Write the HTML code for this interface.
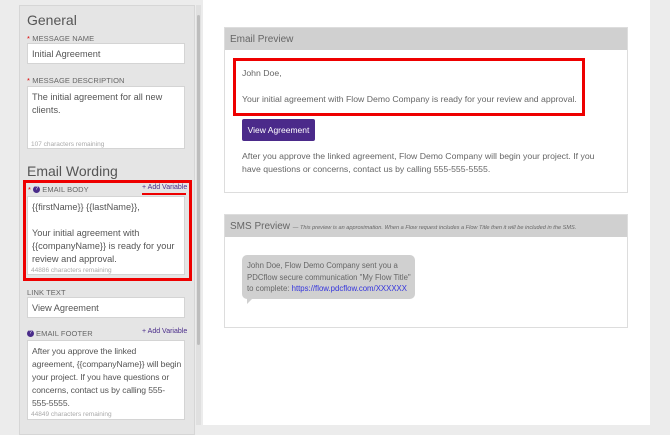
<!DOCTYPE html>
<html><head><style>
*{margin:0;padding:0;box-sizing:border-box}
body{width:670px;height:425px;overflow:hidden;background:#ececec;font-family:"Liberation Sans",sans-serif;position:relative}
.a{position:absolute;white-space:nowrap}
.w{white-space:normal}
.lp{left:19px;top:5px;width:176px;height:430px;background:#e5e5e5;border:1px solid #d6d6d6}
.h{font-size:14px;color:#555}
.lbl{font-size:7.5px;color:#666;letter-spacing:.1px}
.lbl b{color:#d00;font-weight:normal}
.in{left:27px;width:158px;background:#fff;border:1px solid #d4d4d4;font-size:9.2px;color:#555;padding:4px 4px;line-height:13px;white-space:nowrap;overflow:hidden}
.rem{font-size:6.5px;color:#aaa;left:31px}
.av{font-size:7px;color:#4a2c8a}
.q{display:inline-block;width:7px;height:7px;border-radius:50%;background:#4a2c8a;color:#fff;font-size:5px;text-align:center;line-height:7px;vertical-align:middle;margin-right:2px;margin-top:-2px}
.card{left:224px;width:404px;background:#fff;border:1px solid #ddd}
.ch{height:22px;background:#d0d0d0;font-size:10px;color:#666;padding:6px 5px;white-space:nowrap;overflow:hidden}
.t{font-size:8.7px;color:#666}
</style></head><body>
<div class="a lp"></div>
<div class="a" style="left:196px;top:5px;width:5px;height:420px;background:#e0e0e0"></div>
<div class="a" style="left:197px;top:15px;width:3px;height:330px;background:#bdbdbd;border-radius:2px"></div>
<div class="a" style="left:203px;top:0;width:447px;height:425px;background:#fff"></div>

<div class="a h" style="left:27px;top:12px">General</div>
<div class="a lbl" style="left:27px;top:34px"><b>*</b> MESSAGE NAME</div>
<div class="a in" style="top:43px;height:21px">Initial Agreement</div>
<div class="a lbl" style="left:27px;top:76px"><b>*</b> MESSAGE DESCRIPTION</div>
<div class="a in" style="top:86px;height:63px">The initial agreement for all new<br>clients.</div>
<div class="a rem" style="top:141px">107 characters remaining</div>
<div class="a h" style="left:27px;top:163px">Email Wording</div>
<div class="a" style="left:23px;top:180px;width:169px;height:101px;border:3px solid #e00"></div>
<div class="a lbl" style="left:28px;top:185px"><b>*</b> <span class="q">?</span>EMAIL BODY</div>
<div class="a av" style="left:142px;top:184px">+ Add Variable</div>
<div class="a" style="left:142px;top:193px;width:44px;height:2px;background:#e00"></div>
<div class="a in" style="top:196px;height:79px">{{firstName}} {{lastName}},<br><br>Your initial agreement with<br>{{companyName}} is ready for your<br>review and approval.</div>
<div class="a rem" style="top:267px">44886 characters remaining</div>
<div class="a lbl" style="left:27px;top:288px">LINK TEXT</div>
<div class="a in" style="top:297px;height:21px">View Agreement</div>
<div class="a lbl" style="left:27px;top:329px"><span class="q">?</span>EMAIL FOOTER</div>
<div class="a av" style="left:142px;top:328px">+ Add Variable</div>
<div class="a in" style="top:340px;height:80px;font-size:8.6px;letter-spacing:-0.1px">After you approve the linked<br>agreement, {{companyName}} will begin<br>your project. If you have questions or<br>concerns, contact us by calling 555-<br>555-5555.</div>
<div class="a rem" style="top:411px">44849 characters remaining</div>

<div class="a card" style="top:27px;height:166px"><div class="ch">Email Preview</div></div>
<div class="a" style="left:233px;top:58px;width:352px;height:58px;border:3px solid #e00"></div>
<div class="a t" style="left:242px;top:68px">John Doe,</div>
<div class="a t" style="left:242px;top:94px">Your initial agreement with Flow Demo Company is ready for your review and approval.</div>
<div class="a" style="left:242px;top:119px;width:73px;height:22px;background:#4b2a8a;border-radius:2px;color:#fff;font-size:8.5px;text-align:center;line-height:22px">View Agreement</div>
<div class="a t" style="left:242px;top:150px;line-height:13px">After you approve the linked agreement, Flow Demo Company will begin your project. If you<br>have questions or concerns, contact us by calling 555-555-5555.</div>

<div class="a card" style="top:214px;height:114px"><div class="ch" style="font-size:10px">SMS Preview <i style="font-size:5.6px">— This preview is an approximation. When a Flow request includes a Flow Title then it will be included in the SMS.</i></div></div>
<div class="a" style="left:242px;top:255px;width:173px;height:44px;background:#d0d0d0;border-radius:5px;font-size:7.8px;color:#666;padding:5px 5px;line-height:11.5px">John Doe, Flow Demo Company sent you a<br>PDCflow secure communication "My Flow Title"<br>to complete: <span style="color:#3333dd">https://flow.pdcflow.com/XXXXXX</span></div>
<div class="a" style="left:247px;top:298px;width:0;height:0;border-left:6px solid #d0d0d0;border-bottom:6px solid transparent"></div>
</body></html>
